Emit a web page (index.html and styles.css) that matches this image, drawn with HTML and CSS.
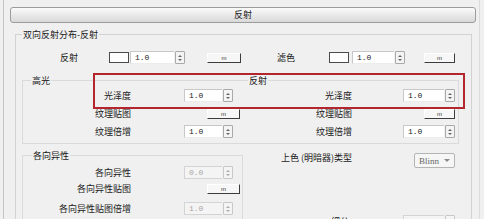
FILE: index.html
```html
<!DOCTYPE html>
<html lang="zh">
<head>
<meta charset="utf-8">
<title>反射</title>
<link rel="stylesheet" href="styles.css">
</head>
<body>
<div class="rollout">
  <div class="bar">反射</div>
  <fieldset class="outer">
    <legend>双向反射分布-反射</legend>
    <div class="row">
      <span class="lbl w62">反射</span>
      <span class="swatch ml31"></span>
      <span class="spin ml1 w55"><span class="val">1.0</span><span class="arr"><i class="up"></i><i class="dn"></i></span></span>
      <span class="btn ml22 w34">m</span>
      <span class="lbl w50 ml4">滤色</span>
      <span class="swatch ml34"></span>
      <span class="spin ml3 w53"><span class="val">1.0</span><span class="arr"><i class="up"></i><i class="dn"></i></span></span>
      <span class="btn ml19 w31">m</span>
    </div>

    <div class="subs">
      <fieldset class="sub left">
        <legend class="lg-hl">高光</legend>
        <div class="row first">
          <span class="lbl w108">光泽度</span>
          <span class="spin ml53 w49"><span class="val">1.0</span><span class="arr"><i class="up"></i><i class="dn"></i></span></span>
        </div>
        <div class="row">
          <span class="lbl w108">纹理贴图</span>
          <span class="btn ml76 w33">m</span>
        </div>
        <div class="row">
          <span class="lbl w108">纹理倍增</span>
          <span class="spin ml53 w49"><span class="val">1.0</span><span class="arr"><i class="up"></i><i class="dn"></i></span></span>
        </div>
      </fieldset>
      <fieldset class="sub right">
        <legend class="lg-rf">反射</legend>
        <div class="row first">
          <span class="lbl w109">光泽度</span>
          <span class="spin ml51 w52"><span class="val">1.0</span><span class="arr"><i class="up"></i><i class="dn"></i></span></span>
        </div>
        <div class="row">
          <span class="lbl w109">纹理贴图</span>
          <span class="btn ml72 w31">m</span>
        </div>
        <div class="row">
          <span class="lbl w109">纹理倍增</span>
          <span class="spin ml51 w52"><span class="val">1.0</span><span class="arr"><i class="up"></i><i class="dn"></i></span></span>
        </div>
      </fieldset>
    </div>

    <div class="bottom">
      <fieldset class="aniso">
        <legend class="lg-an">各向异性</legend>
        <div class="row a1">
          <span class="lbl w108">各向异性</span>
          <span class="spin off ml53 w49"><span class="val">0.0</span><span class="arr"><i class="up"></i><i class="dn"></i></span></span>
        </div>
        <div class="row a2">
          <span class="lbl w108">各向异性贴图</span>
          <span class="btn ml76 w33">m</span>
        </div>
        <div class="row a3">
          <span class="lbl w108">各向异性贴图倍增</span>
          <span class="spin off ml53 w49"><span class="val">1.0</span><span class="arr"><i class="up"></i><i class="dn"></i></span></span>
        </div>
      </fieldset>
      <div class="rcol">
        <div class="row shader">
          <span class="lbl w109 up1">上色 (明暗器)类型</span>
          <span class="drop ml62"><span class="dval">Blinn</span><span class="darr"></span></span>
        </div>
        <div class="row subdiv">
          <span class="lbl w106">细分</span>
          <span class="spin off ml54 w52"><span class="val">8</span><span class="arr"><i class="up"></i><i class="dn"></i></span></span>
        </div>
      </div>
    </div>
  </fieldset>
</div>
<div class="mark"></div>
</body>
</html>
```

FILE: styles.css
```css
* { box-sizing: border-box; }
html, body { margin: 0; padding: 0; }
body {
  background: #f0f0f0;
  font-family: "Noto Sans CJK SC", "Noto Sans", sans-serif;
  font-size: 9px;
  color: #1a1a1a;
  width: 484px;
  height: 219px;
  overflow: hidden;
  position: relative;
}
.rollout {
  margin-left: 3px;
  width: 477px;
  height: 240px;
  border-left: 1px solid #c4c4c4;
  border-right: 1px solid #dcdcdc;
  padding-top: 7px;
}
.bar {
  margin-left: 6px;
  width: 466px;
  height: 16px;
  border: 1px solid #9c9c9c;
  border-radius: 3px;
  background: linear-gradient(#fbfbfb, #e6e6e6 60%, #d9d9d9);
  text-align: center;
  line-height: 14px;
  font-size: 9px;
}
fieldset {
  margin: 0;
  padding: 0;
  min-width: 0;
  border: 1px solid #d6d6d6;
}
legend {
  padding: 0 1px;
  line-height: 11px;
  font-size: 9px;
}
.outer {
  margin-top: 6px;
  margin-left: 11px;
  width: 457px;
  height: 240px;
  border-color: #d2d2d2;
}
.outer > legend { margin-left: 6px; }
.row {
  display: flex;
  align-items: center;
  height: 13px;
  margin-top: 5px;
}
.outer > .row { margin-top: 11px; }
.lbl {
  flex: none;
  text-align: right;
  line-height: 13px;
  white-space: nowrap;
}
.up1 { position: relative; top: -3px; }
.w31 { width: 31px; } .w33 { width: 33px; } .w34 { width: 34px; }
.w49 { width: 49px; } .w50 { width: 50px; } .w52 { width: 52px; }
.w53 { width: 53px; } .w55 { width: 55px; } .w62 { width: 62px; }
.w106 { width: 106px; } .w108 { width: 108px; } .w109 { width: 109px; }
.ml1 { margin-left: 1px; } .ml3 { margin-left: 3px; } .ml4 { margin-left: 4px; }
.ml19 { margin-left: 19px; } .ml22 { margin-left: 22px; } .ml31 { margin-left: 31px; }
.ml34 { margin-left: 34px; } .ml51 { margin-left: 51px; } .ml53 { margin-left: 53px; }
.ml54 { margin-left: 54px; } .ml62 { margin-left: 62px; } .ml72 { margin-left: 72px; }
.ml76 { margin-left: 76px; }

.swatch {
  flex: none;
  width: 20px;
  height: 11px;
  background: #fdfdfd;
  border: 1px solid #4a4a4a;
}
.spin {
  flex: none;
  display: flex;
  height: 13px;
  gap: 1px;
}
.val {
  flex: 1;
  background: #fff;
  border-top: 1px solid #c8c8c8;
  border-left: 1px solid #c8c8c8;
  border-bottom: 1px solid #ececec;
  font-family: "Liberation Mono", "DejaVu Sans Mono", monospace;
  font-size: 8px;
  line-height: 11px;
  padding-left: 4px;
  color: #222;
}
.arr {
  flex: none;
  width: 10px;
  border: 1px solid #a9a9a9;
  border-radius: 1px;
  background: #f4f4f4;
  display: flex;
  flex-direction: column;
  align-items: center;
  justify-content: center;
  gap: 2px;
}
.arr i { display: block; width: 0; height: 0; border-left: 2px solid transparent; border-right: 2px solid transparent; }
.arr .up { border-bottom: 2px solid #666; }
.arr .dn { border-top: 2px solid #666; }
.spin.off .val { background: #f4f4f4; color: #a6a6a6; border-color: #d4d4d4; }
.spin.off .arr { border-color: #c8c8c8; }
.spin.off .arr .up { border-bottom-color: #aaa; }
.spin.off .arr .dn { border-top-color: #aaa; }

.btn {
  flex: none;
  height: 10px;
  background: #f7f7f7;
  border-top: 1px solid #ffffff;
  border-left: 1px solid #ffffff;
  border-right: 1px solid #3c3c3c;
  border-bottom: 1px solid #3c3c3c;
  font-family: "Liberation Sans", sans-serif;
  font-size: 6px;
  line-height: 8px;
  text-align: center;
  color: #333;
}

.subs {
  display: flex;
  margin-top: 11px;
  margin-left: 6px;
}
.sub { padding-bottom: 5px; border-color: #dadada; }
.sub.left { width: 221px; border-right: none; }
.sub.right { width: 216px; border-left: none; }
.sub .row.first { margin-top: 3px; }
.lg-hl { margin-left: 8px; }
.lg-rf { margin-left: 5px; }

.bottom {
  display: flex;
  margin-left: 6px;
}
.aniso {
  margin-top: 6px;
  width: 221px;
  height: 90px;
  border-color: #dadada;
}
.lg-an { margin-left: 9px; }
.aniso .a1 { margin-top: 5px; }
.aniso .a2 { margin-top: 3px; }
.aniso .a3 { margin-top: 7px; }
.rcol { flex: none; width: 216px; }
.rcol .shader { margin-top: 9px; height: 15px; }
.rcol .subdiv { margin-top: 47px; }
.drop {
  flex: none;
  width: 41px;
  height: 15px;
  border: 1px solid #b4b4b4;
  border-radius: 2px;
  background: #f6f6f6;
  display: flex;
  align-items: center;
  padding-left: 4px;
}
.dval {
  flex: 1;
  font-family: "Liberation Serif", serif;
  font-size: 9px;
  color: #666;
}
.darr {
  width: 0; height: 0;
  margin-right: 4px;
  border-left: 3px solid transparent;
  border-right: 3px solid transparent;
  border-top: 3px solid #8a8a8a;
}
.mark {
  position: absolute;
  left: 93px;
  top: 73px;
  width: 372px;
  height: 36px;
  border: 2px solid #b3262e;
}
```
